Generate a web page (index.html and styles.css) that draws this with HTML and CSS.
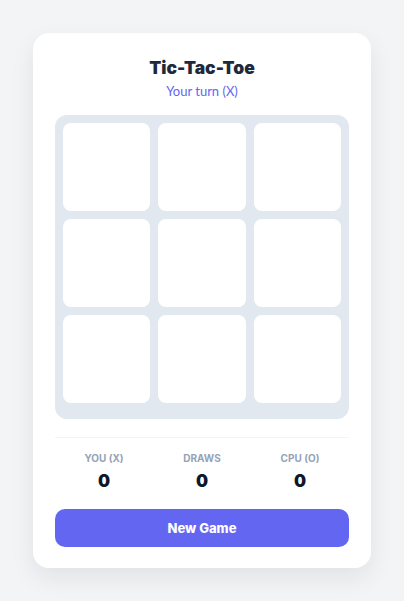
FILE: index.html
```html
<!DOCTYPE html>
<html>
<head>
<meta charset="utf-8">
<link rel="stylesheet" href="styles.css">
</head>
<body>
<div class="card">
  <h1 class="title">Tic-Tac-Toe</h1>
  <div class="status">Your turn (X)</div>
  <div class="board">
    <button class="cell"></button>
    <button class="cell"></button>
    <button class="cell"></button>
    <button class="cell"></button>
    <button class="cell"></button>
    <button class="cell"></button>
    <button class="cell"></button>
    <button class="cell"></button>
    <button class="cell"></button>
  </div>
  <div class="scores">
    <div class="score"><div class="label">YOU (X)</div><div class="value">0</div></div>
    <div class="score"><div class="label">DRAWS</div><div class="value">0</div></div>
    <div class="score"><div class="label">CPU (O)</div><div class="value">0</div></div>
  </div>
  <button class="new-game">New Game</button>
</div>
</body>
</html>
```
FILE: styles.css
```css
* { box-sizing: border-box; }
html, body { margin: 0; padding: 0; }
body {
  background: #f3f4f6;
  font-family: Lato, "Noto Sans", sans-serif;
  padding-top: 33px;
  display: flex;
  justify-content: center;
  height: 601px;
}
.card {
  width: 338px;
  height: 535px;
  background: #ffffff;
  border-radius: 16px;
  box-shadow: 0 10px 25px rgba(15, 23, 42, 0.08);
  padding: 22px 22px 21px;
  display: flex;
  flex-direction: column;
}
.title {
  margin: 0;
  text-align: center;
  font-family: Inter, Lato, sans-serif;
  font-size: 17.5px;
  font-weight: 900;
  color: #1e293b;
  line-height: 26px;
}
.status {
  text-align: center;
  color: #6366f1;
  font-size: 13px;
  line-height: 18px;
  margin-top: 1px;
}
.board {
  margin-top: 15px;
  background: #e2e8f0;
  border-radius: 12px;
  padding: 8px 8px 16px;
  display: grid;
  grid-template-columns: repeat(3, 1fr);
  grid-template-rows: repeat(3, 88px);
  gap: 8px;
}
.cell {
  border: none;
  background: #ffffff;
  border-radius: 8px;
  padding: 0;
}
.scores {
  margin-top: 18px;
  border-top: 1px solid #f1f5f9;
  padding-top: 13px;
  display: grid;
  grid-template-columns: repeat(3, 1fr);
}
.score { text-align: center; }
.label {
  font-family: Inter, Lato, sans-serif;
  font-size: 10px;
  font-weight: 700;
  color: #94a3b8;
  line-height: 14px;
}
.value {
  font-family: Inter, Lato, sans-serif;
  font-size: 17px;
  font-weight: 900;
  color: #0f172a;
  line-height: 24px;
  margin-top: 4px;
}
.new-game {
  margin-top: 16px;
  height: 39px;
  border: none;
  border-radius: 10px;
  background: #6366f1;
  color: #ffffff;
  font-family: Inter, Lato, sans-serif;
  font-size: 13px;
  font-weight: 800;
}
```
